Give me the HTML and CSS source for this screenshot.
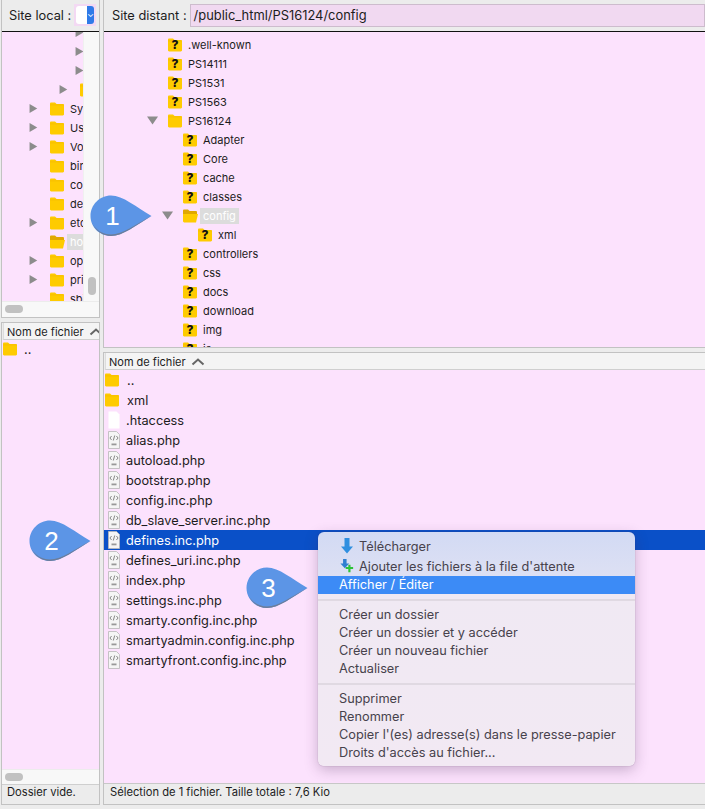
FILE: index.html
```html
<!DOCTYPE html>
<html lang="fr">
<head>
<meta charset="utf-8">
<title>FileZilla</title>
<link rel="stylesheet" href="styles.css">
</head>
<body>
<svg class="defs" width="0" height="0" aria-hidden="true">
  <symbol id="folder" viewBox="0 0 16 16"><path d="M1 2.700C1 2 1.500 1.500 2.200 1.500H6l1.600 1.500h6.200c.7 0 1.200.5 1.200 1.200v9.100c0 .7-.5 1.200-1.200 1.200H2.200C1.500 14.500 1 14 1 13.300Z" fill="#fecb00"/><path d="M1 3.900h14" stroke="#f0b400" stroke-width=".5"/></symbol>
  <symbol id="folder-open" viewBox="0 0 16 16"><path d="M1 2.700C1 2 1.500 1.500 2.200 1.500H6l1.600 1.500h6.200c.7 0 1.200.5 1.200 1.200V7H1Z" fill="#e0a800"/><path d="M1 13.500V6h15l-2 8.500H2Z" fill="#fecb00"/></symbol>
  <symbol id="file" viewBox="0 0 12 18"><path d="M.5.5h8l3 3v14H.5Z" fill="#fff"/></symbol>
  <symbol id="php" viewBox="0 0 12 18"><path d="M.5.5h8l3 3v14H.5Z" fill="#f5f5f5" stroke="#b8b8b8" stroke-width=".8"/><path d="M3.600 5 1.900 7l1.700 2M8.400 5 10.100 7 8.400 9M6.700 4.500 5.300 9.500" fill="none" stroke="#555" stroke-width=".7"/><rect x="3.500" y="12.500" width="5" height="1.800" fill="#999"/></symbol>
  <symbol id="down" viewBox="0 0 14 16"><path d="M4.500 0h5v8.500H13L7 15.500 1 8.500h3.500Z" fill="#2f8fe0"/></symbol>
  <symbol id="queue" viewBox="0 0 16 16"><path d="M3.500 0h4v5h3L5.500 10.500.5 5h3Z" fill="#2f7fd0"/><path d="M9.500 6.500h2.500v2.500h3v2.500h-3V15H9.500v-3.500h-3V9h3Z" fill="#2ec23a"/></symbol>
  <symbol id="drop" viewBox="0 0 62 42"><path d="M21 0.500C33 0.500 46 12 61.500 21 46 30 33 41 21 41 9.500 41 .5 32 .5 21S9.500.5 21 .5Z" fill="#5c95e6"/><path d="M2 28C6 36 13 41 21 41c12 0 25-11 40.500-20C46 29 33 39.500 21 39.500 13 39.500 6 35 2 28Z" fill="#6d7d98"/></symbol>
</svg>

<div class="app">
  <div class="col">
    <section class="panel tree-panel-left">
      <header class="site-bar">
        <span class="site-label">Site local :</span>
        <span class="local-select"><span class="select-blank"></span><span class="select-arrow">⌄</span></span>
      </header>
      <div class="left-body">
        <div class="left-main">
          <div class="tree tree-left">
            <div class="row lv6"><i class="arrow right"></i><span class="ficon"></span><span class="label"></span></div>
            <div class="row lv6"><i class="arrow right"></i><span class="ficon"></span><span class="label"></span></div>
            <div class="row lv6"><i class="arrow right"></i><span class="ficon"></span><span class="label"></span></div>
            <div class="row lv5"><i class="arrow right"></i><svg class="ficon"><use href="#folder"/></svg><span class="label">Library</span></div>
            <div class="row lv3"><i class="arrow right"></i><svg class="ficon"><use href="#folder"/></svg><span class="label">System</span></div>
            <div class="row lv3"><i class="arrow right"></i><svg class="ficon"><use href="#folder"/></svg><span class="label">Users</span></div>
            <div class="row lv3"><i class="arrow right"></i><svg class="ficon"><use href="#folder"/></svg><span class="label">Volumes</span></div>
            <div class="row lv3"><i class="arrow none"></i><svg class="ficon"><use href="#folder"/></svg><span class="label">bin</span></div>
            <div class="row lv3"><i class="arrow none"></i><svg class="ficon"><use href="#folder"/></svg><span class="label">cores</span></div>
            <div class="row lv3"><i class="arrow none"></i><svg class="ficon"><use href="#folder"/></svg><span class="label">dev</span></div>
            <div class="row lv3"><i class="arrow right"></i><svg class="ficon"><use href="#folder"/></svg><span class="label">etc</span></div>
            <div class="row lv3"><i class="arrow none"></i><svg class="ficon"><use href="#folder-open"/></svg><span class="label selected">home</span></div>
            <div class="row lv3"><i class="arrow right"></i><svg class="ficon"><use href="#folder"/></svg><span class="label">opt</span></div>
            <div class="row lv3"><i class="arrow right"></i><svg class="ficon"><use href="#folder"/></svg><span class="label">private</span></div>
            <div class="row lv3"><i class="arrow none"></i><svg class="ficon"><use href="#folder"/></svg><span class="label">sbin</span></div>
          </div>
          <div class="vbar"><span class="vthumb"></span></div>
        </div>
        <div class="hbar"><span class="hthumb"></span></div>
      </div>
    </section>

    <section class="panel files-left">
      <header class="col-head"><span class="col-title">Nom de fichier</span><svg class="sort" viewBox="0 0 14 8"><path d="M1.500 6.500 7 1.500l5.500 5" fill="none" stroke="#666" stroke-width="2"/></svg></header>
      <div class="list list-left">
        <div class="file"><svg class="ficon"><use href="#folder"/></svg><span class="name">..</span></div>
      </div>
      <div class="hbar bottom"><span class="hthumb"></span></div>
      <footer class="status">Dossier vide.</footer>
    </section>
  </div>

  <div class="col">
    <section class="panel tree-panel-right">
      <header class="site-bar">
        <span class="site-label remote">Site distant :</span>
        <span class="path">/public_html/PS16124/config</span>
      </header>
      <div class="tree tree-right">
        <div class="row lv1"><i class="arrow none"></i><svg class="ficon"><use href="#folder"/></svg><b class="q">?</b><span class="label">.well-known</span></div>
        <div class="row lv1"><i class="arrow none"></i><svg class="ficon"><use href="#folder"/></svg><b class="q">?</b><span class="label">PS14111</span></div>
        <div class="row lv1"><i class="arrow none"></i><svg class="ficon"><use href="#folder"/></svg><b class="q">?</b><span class="label">PS1531</span></div>
        <div class="row lv1"><i class="arrow none"></i><svg class="ficon"><use href="#folder"/></svg><b class="q">?</b><span class="label">PS1563</span></div>
        <div class="row lv1"><i class="arrow down-arrow"></i><svg class="ficon"><use href="#folder"/></svg><span class="label">PS16124</span></div>
        <div class="row lv2"><i class="arrow none"></i><svg class="ficon"><use href="#folder"/></svg><b class="q">?</b><span class="label">Adapter</span></div>
        <div class="row lv2"><i class="arrow none"></i><svg class="ficon"><use href="#folder"/></svg><b class="q">?</b><span class="label">Core</span></div>
        <div class="row lv2"><i class="arrow none"></i><svg class="ficon"><use href="#folder"/></svg><b class="q">?</b><span class="label">cache</span></div>
        <div class="row lv2"><i class="arrow none"></i><svg class="ficon"><use href="#folder"/></svg><b class="q">?</b><span class="label">classes</span></div>
        <div class="row lv2"><i class="arrow down-arrow"></i><svg class="ficon"><use href="#folder-open"/></svg><span class="label selected">config</span></div>
        <div class="row lv3r"><i class="arrow none"></i><svg class="ficon"><use href="#folder"/></svg><b class="q">?</b><span class="label">xml</span></div>
        <div class="row lv2"><i class="arrow none"></i><svg class="ficon"><use href="#folder"/></svg><b class="q">?</b><span class="label">controllers</span></div>
        <div class="row lv2"><i class="arrow none"></i><svg class="ficon"><use href="#folder"/></svg><b class="q">?</b><span class="label">css</span></div>
        <div class="row lv2"><i class="arrow none"></i><svg class="ficon"><use href="#folder"/></svg><b class="q">?</b><span class="label">docs</span></div>
        <div class="row lv2"><i class="arrow none"></i><svg class="ficon"><use href="#folder"/></svg><b class="q">?</b><span class="label">download</span></div>
        <div class="row lv2"><i class="arrow none"></i><svg class="ficon"><use href="#folder"/></svg><b class="q">?</b><span class="label">img</span></div>
        <div class="row lv2"><i class="arrow none"></i><svg class="ficon"><use href="#folder"/></svg><b class="q">?</b><span class="label">js</span></div>
      </div>
    </section>

    <section class="panel files-right">
      <header class="col-head"><span class="col-title">Nom de fichier</span><svg class="sort" viewBox="0 0 14 8"><path d="M1.500 6.500 7 1.500l5.500 5" fill="none" stroke="#666" stroke-width="2"/></svg></header>
      <div class="list list-right">
        <div class="file"><svg class="ficon"><use href="#folder"/></svg><span class="name">..</span></div>
        <div class="file"><svg class="ficon"><use href="#folder"/></svg><span class="name">xml</span></div>
        <div class="file"><svg class="page"><use href="#file"/></svg><span class="name">.htaccess</span></div>
        <div class="file"><svg class="page"><use href="#php"/></svg><span class="name">alias.php</span></div>
        <div class="file"><svg class="page"><use href="#php"/></svg><span class="name">autoload.php</span></div>
        <div class="file"><svg class="page"><use href="#php"/></svg><span class="name">bootstrap.php</span></div>
        <div class="file"><svg class="page"><use href="#php"/></svg><span class="name">config.inc.php</span></div>
        <div class="file"><svg class="page"><use href="#php"/></svg><span class="name">db_slave_server.inc.php</span></div>
        <div class="file active"><svg class="page"><use href="#php"/></svg><span class="name">defines.inc.php</span></div>
        <div class="file"><svg class="page"><use href="#php"/></svg><span class="name">defines_uri.inc.php</span></div>
        <div class="file"><svg class="page"><use href="#php"/></svg><span class="name">index.php</span></div>
        <div class="file"><svg class="page"><use href="#php"/></svg><span class="name">settings.inc.php</span></div>
        <div class="file"><svg class="page"><use href="#php"/></svg><span class="name">smarty.config.inc.php</span></div>
        <div class="file"><svg class="page"><use href="#php"/></svg><span class="name">smartyadmin.config.inc.php</span></div>
        <div class="file"><svg class="page"><use href="#php"/></svg><span class="name">smartyfront.config.inc.php</span></div>
      </div>
      <footer class="status status-right">Sélection de 1 fichier. Taille totale : 7,6 Kio</footer>
    </section>
  </div>
</div>

<div class="callout c1"><svg><use href="#drop"/></svg><span>1</span></div>
<div class="callout c2"><svg><use href="#drop"/></svg><span>2</span></div>
<div class="callout c3"><svg><use href="#drop"/></svg><span>3</span></div>

<nav class="menu">
  <div class="item tall"><svg class="mi"><use href="#down"/></svg>Télécharger</div>
  <div class="item tall"><svg class="mi"><use href="#queue"/></svg>Ajouter les fichiers à la file d'attente</div>
  <div class="item on">Afficher / Éditer</div>
  <hr class="sep">
  <div class="item">Créer un dossier</div>
  <div class="item">Créer un dossier et y accéder</div>
  <div class="item">Créer un nouveau fichier</div>
  <div class="item">Actualiser</div>
  <hr class="sep">
  <div class="item">Supprimer</div>
  <div class="item">Renommer</div>
  <div class="item">Copier l'(es) adresse(s) dans le presse-papier</div>
  <div class="item">Droits d'accès au fichier...</div>
</nav>
</body>
</html>
```

FILE: styles.css
```css
* { box-sizing: border-box; }
html, body { margin: 0; height: 100%; overflow: hidden; }
body { background: #ececec; font-family: Inter, "Liberation Sans", Arial, sans-serif; font-size: 12px; color: #1c1c1c; position: relative; }
.defs { position: absolute; }

.app { display: grid; grid-template-columns: 99px 602px; column-gap: 3px; padding-left: 1px; height: 805px; }
.col { display: flex; flex-direction: column; min-width: 0; }
.panel { display: flex; flex-direction: column; border: 1px solid #c2c2c2; min-height: 0; overflow: hidden; }
.col > .panel + .panel { margin-top: 4px; }
.tree-panel-left { height: 318px; border-top: 0; }
.files-left { flex: 1; }
.tree-panel-right { height: 348px; border-top: 0; border-right: 0; }
.files-right { flex: 1; border-right: 0; }

.site-bar { flex: none; height: 32px; display: flex; align-items: center; border-bottom: 1px solid #111; background: #ececec; padding-bottom: 1px; }
.site-label { margin-left: 7px; font-size: 12.800px; white-space: nowrap; }
.remote { margin-left: 8px; }
.local-select { margin-left: 3px; width: 22px; height: 22px; background: #f3d9f3; padding: 2px; display: flex; flex: none; }
.select-blank { width: 12px; background: #fff; border-radius: 3px 0 0 3px; }
.select-arrow { width: 8px; background: #2f7ae8; color: #fff; border-radius: 0 3px 3px 0; font-size: 9px; line-height: 15px; text-align: center; }
.path { margin-left: 3px; flex: 1; height: 23px; background: #f1d9f1; border: 1px solid #cdbccd; padding-left: 3px; font-size: 12.900px; line-height: 22px; white-space: nowrap; }

.left-body { flex: 1; min-height: 0; display: flex; flex-direction: column; }
.left-main { flex: 1; min-height: 0; display: flex; background: #fce2fd; }
.tree { overflow: hidden; background: #fce2fd; }
.tree-left { width: 81px; flex: none; }
.tree-left .row:first-child { margin-top: -9px; }
.tree-right { flex: 1; padding-top: 3px; }
.vbar { flex: 1; background: #f8f8f8; border-left: 1px solid #f0f0f0; display: flex; flex-direction: column; align-items: center; justify-content: flex-end; padding-bottom: 6px; }
.vthumb { width: 8px; height: 18px; background: #c1c1c1; border-radius: 4px; }
.hbar { flex: none; height: 16px; background: #f8f8f8; border-top: 1px solid #ececec; padding: 3px 0 0 3px; }
.hthumb { display: block; width: 18px; height: 8px; background: #c1c1c1; border-radius: 4px; }
.hbar.bottom { height: 15px; }

.row { height: 19px; display: flex; align-items: center; white-space: nowrap; position: relative; font-size: 11px; }
.lv1 { padding-left: 43px; }
.lv2 { padding-left: 58px; }
.lv3r { padding-left: 73px; }
.lv3 { padding-left: 27px; }
.lv5 { padding-left: 57px; }
.lv6 { padding-left: 73px; }
.arrow { flex: none; width: 11px; height: 10px; margin-right: 9px; display: block; }
.arrow.right { background: #8c8c8c; clip-path: polygon(5% 5%, 75% 50%, 5% 95%); }
.arrow.down-arrow { background: #8c8c8c; clip-path: polygon(0 10%, 100% 10%, 50% 90%); }
.ficon { flex: none; width: 16px; height: 16px; display: block; }
.q { position: absolute; width: 16px; text-align: center; font-size: 12px; color: #111; font-weight: 800; }
.lv1 .q { left: 63px; }
.lv2 .q { left: 78px; }
.lv3r .q { left: 93px; }
.label { margin-left: 2px; padding: 0 3px; line-height: 16px; }
.label.selected { background: #dcdcdc; color: #fff; }

.col-head { flex: none; height: 17px; margin-left: 1px; background: #f4f4f4; border-bottom: 1px solid #cfcfcf; display: flex; align-items: center; padding: 1px 0 0 3px; gap: 5px; font-size: 11px; border-left: 1px solid #dcdcdc; white-space: nowrap; }
.sort { width: 14px; height: 8px; flex: none; }
.list { flex: 1; min-height: 0; background: #fce2fd; }
.list-right { border-bottom: 1px solid #c8c8c8; }
.file { height: 20px; display: flex; align-items: center; font-size: 12.750px; white-space: nowrap; }
.file .ficon { margin: 0 6px 0 0; }
.list-left .file { height: 18px; }
.list-left .name { margin-left: 0; }
.page { flex: none; width: 12px; height: 18px; margin: 0 6px 0 4px; display: block; }
.file.active { background: #0a50c8; color: #fff; }
.list-right .ficon + .name { margin-left: 1px; }
.status { flex: none; height: 20px; padding-left: 5px; background: #ececec; font-size: 11.200px; line-height: 15px; border-top: 1px solid #cfcfcf; }
.status-right { border-top: 0; line-height: 16px; padding-left: 6px; }

.callout { position: absolute; width: 62px; height: 42px; }
.callout svg { width: 62px; height: 42px; display: block; }
.callout span { position: absolute; left: 9.500px; top: 0; width: 26px; text-align: center; font-family: "Liberation Sans", Arial, sans-serif; font-size: 26px; line-height: 42px; color: #fff; }
.c1 { left: 90px; top: 195px; }
.c2 { left: 29px; top: 520px; }
.c3 { left: 246px; top: 567px; }

.menu { position: absolute; left: 318px; top: 532px; width: 317px; height: 234px; padding: 4px 0 5px; border-radius: 6px; background: linear-gradient(#d2daf4 0, #dde0f3 44px, #f0e9f3 60px, #f2e9f3 100%); box-shadow: 0 0 1px rgba(60, 40, 70, .55), 0 4px 14px rgba(70, 40, 80, .28); color: #47424c; font-size: 12.750px; }
.item { height: 18px; line-height: 18px; padding-left: 21px; white-space: nowrap; position: relative; }
.item.tall { height: 20px; line-height: 22px; padding-left: 41px; }
.item.on { background: #3c8bf6; color: #fff; }
.mi { position: absolute; left: 22px; top: 2px; width: 14px; height: 16px; }
.sep { height: 2px; margin: 5px 0 5px; border: 0; background: #e0d9e2; }
```
